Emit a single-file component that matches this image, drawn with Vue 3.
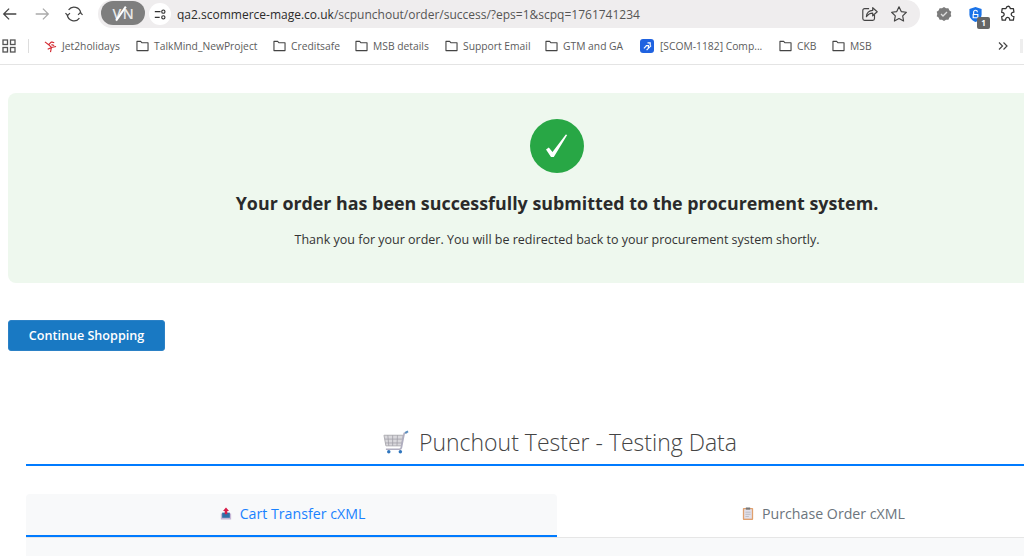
<script setup>
const bookmarks = [
  { label: 'TalkMind_NewProject', width: 137 },
  { label: 'Creditsafe', width: 82 },
  { label: 'MSB details', width: 90 },
  { label: 'Support Email', width: 100 },
  { label: 'GTM and GA', width: 95 },
]
const bookmarksAfter = [
  { label: 'CKB', width: 53 },
  { label: 'MSB', width: 50 },
]
</script>

<template>
  <div class="page">
    <header class="toolbar">
      <div class="nav">
        <svg class="nav-icon" viewBox="0 0 20 20"><path d="M17 10H3M9 4l-6 6 6 6" fill="none" stroke="#444" stroke-width="1.4"/></svg>
        <svg class="nav-icon" viewBox="0 0 20 20"><path d="M3 10h14M11 4l6 6-6 6" fill="none" stroke="#aaa" stroke-width="1.4"/></svg>
        <svg class="nav-icon" viewBox="0 0 20 20"><path d="M2.500 11a7.500 7.500 0 0 0 13.500 3.500M17.500 9A7.500 7.500 0 0 0 4 5.500" fill="none" stroke="#444" stroke-width="1.400"/><path d="M.5 9l2.500 2.500L5.500 9M14.500 11l2.500-2.500 2.500 2.500" fill="none" stroke="#444" stroke-width="1.400"/></svg>
      </div>
      <div class="address">
        <span class="vpn">V<i></i>N</span>
        <span class="site-info">
          <svg viewBox="0 0 16 16" width="13" height="13"><path d="M1 4.500h7M1 11.500h6" stroke="#333" stroke-width="1.400" fill="none"/><circle cx="11.500" cy="4.500" r="2" fill="none" stroke="#333" stroke-width="1.400"/><circle cx="11.500" cy="11.500" r="2" fill="none" stroke="#333" stroke-width="1.400"/></svg>
        </span>
        <span class="url">qa2.scommerce-mage.co.uk<span class="url-path">/scpunchout/order/success/?eps=1&amp;scpq=1761741234</span></span>
        <span class="address-actions">
          <svg viewBox="0 0 20 20" width="18" height="18"><path d="M9 4H4a2 2 0 0 0-2 2v9a2 2 0 0 0 2 2h9a2 2 0 0 0 2-2v-4M6 13c0-4 3-7 7-7V3l5 4.500L13 12V9c-3 0-5 1-7 4z" fill="none" stroke="#444" stroke-width="1.300" stroke-linejoin="round"/></svg>
          <svg viewBox="0 0 20 20" width="18" height="18"><path d="M10 2l2.500 5.300 5.700.8-4.100 4 1 5.700-5.100-2.700-5.100 2.700 1-5.700-4.100-4 5.700-.8z" fill="none" stroke="#444" stroke-width="1.300" stroke-linejoin="round"/></svg>
        </span>
      </div>
      <div class="extensions">
        <svg viewBox="0 0 16 16" width="16" height="16"><path d="M8 1l2 1.300 2.400-.1 1 2.200 1.900 1.400-.6 2.200.6 2.200-1.900 1.400-1 2.200-2.400-.1L8 15l-2-1.300-2.400.1-1-2.200L.7 10.200 1.300 8 .7 5.800l1.900-1.400 1-2.200 2.400.1z" fill="#7b7b7b"/><path d="M5 8l2 2 4-4" stroke="#ddd" stroke-width="1.300" fill="none"/></svg>
        <span class="shield">
          <svg viewBox="0 0 16 18" width="15" height="17"><path d="M8 1l6.500 2.200v5.500c0 4-3 7-6.500 8.300C4.500 15.700 1.500 12.700 1.500 8.700V3.200z" fill="#1a73e8"/><path d="M6 9V6.500a2 2 0 0 1 4 0M5.500 9h5v3.500h-5z" stroke="#fff" stroke-width="1.200" fill="none"/></svg>
          <b class="badge">1</b>
        </span>
        <svg viewBox="0 0 20 20" width="18" height="18"><path d="M8 3.500a2.200 2.200 0 0 1 4.200-.8l.3 1.300h3.500l.6 4-1.500.3a2.200 2.200 0 0 0 0 4.200l1.500.3-.6 4h-4l-.3-1.500a2.200 2.200 0 0 0-4.200 0l-.3 1.500H3.500l-.5-4 1.500-.4a2.200 2.200 0 0 0 0-4L3 8.100 3.500 4H7.500z" fill="none" stroke="#333" stroke-width="1.400" stroke-linejoin="round"/></svg>
      </div>
    </header>

    <nav class="bookmarks">
      <svg class="apps" viewBox="0 0 14 14" width="14" height="14"><g fill="none" stroke="#555" stroke-width="1.300"><rect x="1" y="1" width="4.500" height="4.500"/><rect x="8.500" y="1" width="4.500" height="4.500"/><rect x="1" y="8.500" width="4.500" height="4.500"/><rect x="8.500" y="8.500" width="4.500" height="4.500"/></g></svg>
      <span class="sep"></span>
      <span class="bookmark jet">
        <svg viewBox="0 0 14 14" width="13" height="13"><path d="M1 2l4 3 3-3M8 2l3 1M5 5l3 3M8 8l5-1M8 8l-1 5M8 8L4 10M8 5l3 1" stroke="#d3272f" stroke-width="1.200" fill="none"/></svg>
        Jet2holidays
      </span>
      <span v-for="b in bookmarks" :key="b.label" class="bookmark" :style="{ width: b.width + 'px' }">
        <svg class="folder" viewBox="0 0 14 13" width="13" height="12"><path d="M1 11V1.500h4L6.500 3H13v8.500H1z" fill="none" stroke="#444" stroke-width="1.200" stroke-linejoin="round"/></svg>
        {{ b.label }}
      </span>
      <span class="bookmark jira">
        <span class="jira-icon">
          <svg viewBox="0 0 10 10" width="9" height="9"><path d="M1 7l3-3M4 9l5-5M5 1h3v3M3 4h3v3" stroke="#fff" stroke-width="1.300" fill="none"/></svg>
        </span>
        [SCOM-1182] Comp...
      </span>
      <span v-for="b in bookmarksAfter" :key="b.label" class="bookmark" :style="{ width: b.width + 'px' }">
        <svg class="folder" viewBox="0 0 14 13" width="13" height="12"><path d="M1 11V1.500h4L6.500 3H13v8.500H1z" fill="none" stroke="#444" stroke-width="1.200" stroke-linejoin="round"/></svg>
        {{ b.label }}
      </span>
      <span class="more">
        <svg viewBox="0 0 10 10" width="10" height="10"><path d="M1 1.500L4.500 5 1 8.500M5.500 1.500L9 5 5.500 8.500" fill="none" stroke="#444" stroke-width="1.200"/></svg>
      </span>
      <span class="edge"></span>
    </nav>

    <main class="content">
      <section class="success">
        <div class="check">
          <svg viewBox="0 0 54 54" width="54" height="54"><path d="M16 30.500L18.800 28.500L22.500 33L35.800 15.500L37.200 16L23.800 38L21 38z" fill="#fff"/></svg>
        </div>
        <h1>Your order has been successfully submitted to the procurement system.</h1>
        <p>Thank you for your order. You will be redirected back to your procurement system shortly.</p>
      </section>

      <button class="continue">Continue Shopping</button>

      <section class="tester">
        <h2>
          <svg class="cart" viewBox="0 0 28 24" width="27" height="24">
            <path d="M1 5h20l-2 11H3z" fill="#d9d8dc" stroke="#aeadb2"/>
            <path d="M5 5l1 11M10 5v11M15 5l-.5 11M2 9h18M2.500 13h17" stroke="#a09fa6" stroke-width=".8"/>
            <path d="M25 2l-3 1-3 15c-.2 1-1 1.500-2 1.500H3" fill="none" stroke="#b0aec0" stroke-width="1.700"/>
            <path d="M23 2.500L26 1" stroke="#5a8fc0" stroke-width="2"/>
            <circle cx="6" cy="22" r="1.800" fill="#2f75bd"/><circle cx="18" cy="22" r="1.800" fill="#2f75bd"/>
          </svg>
          Punchout Tester - Testing Data
        </h2>
        <div class="tabs">
          <div class="tab active">
            <svg viewBox="0 0 14 16" width="12" height="15"><path d="M1 8h12v7H1z" fill="#c7b7d6"/><path d="M2.500 7h9v6h-9z" fill="#2f6fa8"/><path d="M7 1l3.500 4H8.500v4h-3V5H3.500z" fill="#d81e4a"/></svg>
            Cart Transfer cXML
          </div>
          <div class="tab">
            <svg viewBox="0 0 14 16" width="12" height="15"><rect x="1" y="1.500" width="12" height="14" rx="1" fill="#e0a06e"/><rect x="2.500" y="3" width="9" height="11" fill="#e1dfea"/><rect x="4.500" y="1" width="5" height="2.500" fill="#777"/><path d="M4 6.500h6M4 9h6M4 11.500h4" stroke="#aaa" stroke-width=".7"/></svg>
            Purchase Order cXML
          </div>
        </div>
        <div class="tab-panel"><div class="panel-inner"></div></div>
      </section>
    </main>
  </div>
</template>

<style>
html, body { margin: 0; background: #fff; overflow: hidden; }
</style>

<style scoped>
.page {
  width: 1024px;
  height: 556px;
  overflow: hidden;
  font-family: "Open Sans", sans-serif;
  background: #fff;
}
.toolbar {
  display: flex;
  align-items: center;
  height: 28px;
}
.nav {
  display: flex;
  align-items: center;
  gap: 14px;
  width: 98px;
  padding-left: 1px;
  box-sizing: border-box;
}
.nav-icon { width: 18px; height: 18px; flex: none; }
.address {
  display: flex;
  align-items: center;
  width: 822px;
  height: 28px;
  background: #efedee;
  border-radius: 14px;
  box-sizing: border-box;
  padding: 0 12px 0 3px;
}
.vpn {
  display: flex;
  align-items: center;
  justify-content: center;
  width: 44px;
  height: 24px;
  border-radius: 12px;
  background: #7e7e7e;
  color: #e8e8e8;
  font-size: 14px;
  font-weight: 600;
  margin-bottom: 2px;
}
.vpn i {
  width: 1.500px;
  height: 17px;
  margin: 0 1px 0 -1px;
  background: #fff;
  transform: rotate(35deg);
}
.site-info {
  display: flex;
  align-items: center;
  justify-content: center;
  width: 22px;
  height: 22px;
  margin-left: 4px;
  border-radius: 50%;
  background: #fff;
}
.url {
  margin-left: 6px;
  font-size: 12px;
  color: #2b2b2b;
  white-space: nowrap;
}
.url-path { color: #555; }
.address-actions {
  display: flex;
  align-items: center;
  gap: 11px;
  margin-left: auto;
}
.extensions {
  display: flex;
  align-items: center;
  margin-left: 16px;
  gap: 16px;
}
.shield { position: relative; display: flex; }
.badge {
  position: absolute;
  right: -7px;
  bottom: -6px;
  width: 13px;
  height: 12px;
  border-radius: 2px;
  background: #666;
  color: #fff;
  font-size: 8px;
  line-height: 12px;
  text-align: center;
}
.bookmarks {
  display: flex;
  align-items: center;
  height: 36px;
  border-bottom: 1px solid #e4e4e4;
  padding-left: 2px;
  font-size: 10.300px;
  color: #5c5c5c;
  white-space: nowrap;
}
.apps { flex: none; }
.sep {
  width: 1px;
  height: 14px;
  margin: 0 15px 0 12px;
  background: #ddd;
}
.bookmark {
  display: flex;
  align-items: center;
  gap: 5px;
  flex: none;
}
.jet { width: 92px; gap: 5px; }
.jira { width: 139px; gap: 6px; }
.jira-icon {
  display: flex;
  align-items: center;
  justify-content: center;
  width: 14px;
  height: 14px;
  border-radius: 3px;
  background: #1f62e0;
}
.more { margin-left: 116px; display: flex; }
.edge {
  width: 3px;
  height: 14px;
  margin-left: 12px;
  background: #eee;
}
.content {
  width: 1098px;
  padding: 28px 0 0 8px;
}
.success {
  height: 190px;
  box-sizing: border-box;
  padding-top: 26px;
  border-radius: 8px;
  background: #eef8ee;
  text-align: center;
}
.check {
  width: 54px;
  height: 54px;
  margin: 0 auto;
  border-radius: 50%;
  background: #28a745;
}
.check svg { display: block; }
h1 {
  margin: 17px 0 0;
  font-size: 17.850px;
  line-height: 26px;
  font-weight: 700;
  color: #2a2a2a;
}
p {
  margin: 15px 0 0;
  font-size: 12.500px;
  line-height: 18px;
  color: #333;
}
.continue {
  display: block;
  width: 157px;
  height: 31px;
  margin-top: 37px;
  padding: 0;
  border: 1px solid #2b81c6;
  border-radius: 3px;
  background: #1979c3;
  color: #fff;
  font-family: inherit;
  font-size: 12.600px;
  font-weight: 600;
}
.tester {
  width: 1062px;
  margin: 73px 0 0 18px;
}
h2 {
  display: flex;
  align-items: center;
  justify-content: center;
  gap: 9px;
  margin: 0;
  padding: 0 0 4px 6px;
  box-sizing: content-box;
  width: 1056px;
  height: 36px;
  border-bottom: 2px solid #007bff;
  font-size: 23px;
  font-weight: 300;
  color: #444;
  line-height: 36px;
}
.tabs {
  display: flex;
  margin-top: 28px;
  border-bottom: 1px solid #e6e6e6;
}
.tab {
  display: flex;
  align-items: center;
  justify-content: center;
  gap: 8px;
  flex: 1;
  height: 43px;
  padding: 0 0 4px 2px;
  box-sizing: border-box;
  font-size: 14.200px;
  color: #6c757d;
}
.tab.active {
  padding-bottom: 2px;
  border-bottom: 2px solid #007bff;
  border-radius: 4px 4px 0 0;
  background: #f8f9fa;
  color: #1a82ff;
}
.tab-panel {
  height: 30px;
  background: #f8f9fa;
  padding: 18px 0 0 18px;
  box-sizing: border-box;
}
.panel-inner {
  height: 20px;
  border-top: 1px solid #ececec;
}
</style>
